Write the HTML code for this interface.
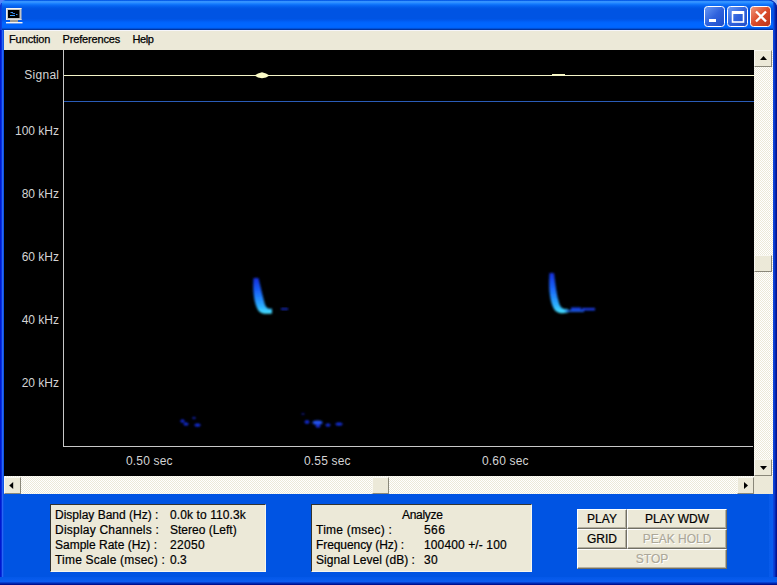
<!DOCTYPE html>
<html>
<head>
<meta charset="utf-8">
<style>
html,body{margin:0;padding:0;}
body{width:777px;height:585px;overflow:hidden;background:#0054e3;font-family:"Liberation Sans",sans-serif;position:relative;}
.abs{position:absolute;}
#frame{left:0;top:0;width:777px;height:585px;background:#0054e3;}
#title{left:0;top:0;width:777px;height:30px;
background:linear-gradient(to bottom,#0058e6 0%,#0a60ea 2%,#3593ff 5%,#2f8fff 9%,#1a80ff 12%,#0a6cf6 17%,#0460ee 22%,#0057e5 27%,#0054e3 32%,#0054e3 62%,#0059ee 68%,#0063fb 74%,#0066ff 80%,#0066ff 91%,#005ae8 94%,#0044c0 96.500%,#003098 99%,#003098 100%);}
#lb{left:0;top:30px;width:4px;height:555px;background:linear-gradient(to right,#0019cf 0,#0019cf 25%,#0a30dc 25%,#0a30dc 50%,#2866f5 50%,#2866f5 75%,#0e54e6 75%,#0e54e6 100%);}
#rb{left:769px;top:30px;width:8px;height:555px;background:linear-gradient(to right,#075aea 0,#0a5cee 50%,#0c44d8 50%,#0c44d8 62.5%,#0a38cc 62.5%,#0a38cc 75%,#0424ac 75%,#0424ac 87.5%,#001494 87.5%,#001494 100%);}
#bb{left:0;top:577px;width:777px;height:8px;background:linear-gradient(to bottom,#0358e8 0,#0a5cee 50%,#0c5cf0 50%,#0c5cf0 62.5%,#0840d0 62.5%,#0840d0 75%,#0028b0 75%,#0028b0 87.5%,#001090 87.5%,#001090 100%);}
#menu{left:4px;top:30px;width:769px;height:20px;background:#ece9d8;box-shadow:inset 0 1px 0 #f6f6fb;font-size:11px;color:#000;}
#menu span{-webkit-text-stroke:0.25px #000;position:absolute;top:3px;line-height:13px;white-space:nowrap;}
#plot{left:4px;top:50px;width:750px;height:426px;background:#000;}
.yl{position:absolute;right:718px;color:#d4d4d4;font-size:12px;line-height:14px;white-space:nowrap;text-align:right;}
.xl{letter-spacing:0.18px;position:absolute;top:454px;color:#d4d4d4;font-size:12px;line-height:14px;white-space:nowrap;}
.track{background-color:#f6f4ec;background-image:conic-gradient(#ffffff 25%,#ece9d8 0 50%,#ffffff 0 75%,#ece9d8 0);background-size:2px 2px;}
.btn3d{position:absolute;background:#ece9d8;box-sizing:border-box;border:1px solid;border-color:#fff #716f64 #716f64 #fff;box-shadow:inset -1px -1px 0 #aca899, inset 1px 1px 0 #f4f2e8;}
.sbtn{position:absolute;background:#ece9d8;box-sizing:border-box;border:1px solid;border-color:#f8f7f0 #8a887a #8a887a #f8f7f0;}
.info{position:absolute;background:#ece9d8;box-sizing:border-box;border:1px solid;border-color:#33332f #f7f6ee #f7f6ee #33332f;font-size:12px;color:#000;}
.info span{-webkit-text-stroke:0.2px #000;position:absolute;line-height:14px;white-space:nowrap;}
.pb{-webkit-text-stroke:0.2px currentColor;box-shadow:inset -1px -1px 0 #b4b0a0;position:absolute;background:#ece9d8;box-sizing:border-box;border:1px solid;border-color:#fff #716f64 #716f64 #fff;font-size:12px;color:#000;text-align:center;line-height:17px;padding-top:1px;white-space:nowrap;}
.pb.dis{color:#aca899;text-shadow:1px 1px 0 #fff;}
</style>
</head>
<body>
<div id="frame" class="abs"></div>
<div id="title" class="abs"></div>
<div id="lb" class="abs"></div>
<div id="rb" class="abs"></div>
<div id="bb" class="abs"></div>

<!-- title edges / corners -->
<div class="abs" style="left:0;top:3px;width:2px;height:27px;background:linear-gradient(to right,#0a34d4,#0c48e2)"></div>
<div class="abs" style="left:773px;top:3px;width:4px;height:27px;background:linear-gradient(to right,#0a4ce0 0,#0a4ce0 25%,#0838c4 25%,#0838c4 50%,#0424a8 50%,#0424a8 75%,#001494 75%,#001494 100%)"></div>
<svg class="abs" style="left:0;top:0" width="777" height="8" viewBox="0 0 777 8">
  <path d="M0 0 L5.500 0 C2.500 1 1 2.500 0 5.500 Z" fill="#5584fa"/>
  <path d="M777 0 L771 0 C774 1.200 775.800 3 777 6 Z" fill="#a4b8f0"/>
  <path d="M771 0 C774 1.200 775.800 3 777 6 L777 8 C775.500 4 773.500 2 769 0 Z" fill="#0a2cb4"/>
</svg>

<!-- title icon -->
<svg class="abs" style="left:6px;top:8px" width="17" height="16" viewBox="0 0 17 16">
  <rect x="0" y="0" width="15.500" height="12" fill="#c4c4c4"/>
  <rect x="0" y="0" width="15.500" height="1" fill="#f4f4f4"/>
  <rect x="0" y="0" width="1" height="12" fill="#f0f0f0"/>
  <rect x="1" y="11" width="14.500" height="1" fill="#dcdcdc"/>
  <rect x="2" y="2" width="11.500" height="8" fill="#000"/>
  <rect x="4.500" y="4" width="2.500" height="1" fill="#3c8ef0"/>
  <rect x="6.500" y="5" width="2.500" height="1" fill="#2f7be0"/>
  <rect x="10" y="6" width="1.500" height="1" fill="#3c8ef0"/>
  <rect x="4" y="7" width="5" height="1" fill="#46a6ff"/>
  <rect x="4" y="12" width="8" height="2" fill="#a09c94"/>
  <rect x="0" y="14" width="16.500" height="1" fill="#f4f4f4"/>
  <rect x="0" y="15" width="16.500" height="0.600" fill="#b8c4e8"/>
</svg>

<!-- caption buttons -->
<svg class="abs" style="left:704px;top:6px" width="68" height="22" viewBox="0 0 68 22">
  <defs>
    <linearGradient id="gb" x1="0" y1="0" x2="1" y2="1">
      <stop offset="0" stop-color="#6a9bf5"/><stop offset="0.5" stop-color="#2f62dd"/><stop offset="1" stop-color="#1e4cc8"/>
    </linearGradient>
    <linearGradient id="gr" x1="0" y1="0" x2="1" y2="1">
      <stop offset="0" stop-color="#ef9a80"/><stop offset="0.5" stop-color="#dc4a28"/><stop offset="1" stop-color="#b8341a"/>
    </linearGradient>
  </defs>
  <rect x="0.5" y="0.5" width="20" height="20" rx="3" fill="url(#gb)" stroke="#fff"/>
  <rect x="23.5" y="0.5" width="20" height="20" rx="3" fill="url(#gb)" stroke="#fff"/>
  <rect x="46.5" y="0.5" width="20" height="20" rx="3" fill="url(#gr)" stroke="#fff"/>
  <rect x="5" y="13" width="7" height="3" fill="#fff"/>
  <rect x="28.500" y="6" width="11" height="10" fill="none" stroke="#fff" stroke-width="1.6"/>
  <rect x="28" y="5" width="12" height="3" fill="#fff"/>
  <path d="M52 5.500 L62 15.500 M62 5.500 L52 15.500" stroke="#fff" stroke-width="2.300" fill="none"/>
</svg>

<div id="menu" class="abs">
  <span style="left:5px;letter-spacing:-0.1px">Function</span>
  <span style="left:58.500px;letter-spacing:-0.15px">Preferences</span>
  <span style="left:128.500px;letter-spacing:-0.45px">Help</span>
</div>

<div id="plot" class="abs"></div>
<svg class="abs" style="left:0;top:0" width="777" height="585" viewBox="0 0 777 585">
  <defs>
    <linearGradient id="call" x1="0" y1="0" x2="0" y2="1">
      <stop offset="0" stop-color="#1230dc"/><stop offset="0.4" stop-color="#1a68fa"/><stop offset="0.8" stop-color="#2cb0ff"/><stop offset="1" stop-color="#48e4ff"/>
    </linearGradient>
    <filter id="bl" x="-50%" y="-50%" width="200%" height="200%"><feGaussianBlur stdDeviation="0.9"/></filter>
    <filter id="bl2" x="-50%" y="-50%" width="200%" height="200%"><feGaussianBlur stdDeviation="0.6"/></filter>
  </defs>
  <!-- axes -->
  <rect x="63" y="50" width="1" height="397" fill="#c8c8c8"/>
  <rect x="63" y="446" width="690" height="1" fill="#c8c8c8"/>
  <!-- signal line -->
  <rect x="64" y="75" width="690" height="1" fill="#f4f4c8"/>
  <path d="M254.500 75.500 L258 73.500 L262 72.300 L266 73.500 L269.500 75.500 L266 77.500 L262 78.300 L258 77.500 Z" fill="#fbfbc6"/>
  <rect x="552" y="74" width="13" height="1" fill="#fbfbc6"/>
  <!-- blue limit line -->
  <rect x="64" y="101" width="690" height="1" fill="#2a5cb8"/>
  <!-- call 1 -->
  <g filter="url(#bl)">
    <path d="M253.500 278 C252.500 290 254 303 258 310 C260 313.500 265 314.500 272 313.500 L272 308.500 C268 309.500 265.500 307.500 264.500 303 C262.500 295 260.500 287 258.500 278 Z" fill="url(#call)"/>
  </g>
  <rect x="281" y="308" width="7" height="2" fill="#1426b4" filter="url(#bl)"/>
  <!-- call 2 -->
  <g filter="url(#bl)">
    <path d="M549.500 273 C548.500 286 549.500 300 553.500 308 C556 313.500 562 314 568 312.500 L568 309 C563 309.500 560.500 308 559 303 C556.500 295 555.500 285 554 273 Z" fill="url(#call)"/>
    <rect x="565" y="310" width="19" height="2" fill="#1a58d8"/>
    <rect x="571" y="307.500" width="10" height="2.400" fill="#1a40ec"/>
    <rect x="582" y="308" width="13" height="2.400" fill="#1a3ce8"/>
  </g>
  <!-- low noise -->
  <g filter="url(#bl)" fill="#1630e8">
    <ellipse cx="182.500" cy="421" rx="2.200" ry="1.500"/><ellipse cx="186" cy="424" rx="2.500" ry="1.600"/><ellipse cx="194" cy="418" rx="1.500" ry="1"/><ellipse cx="197.500" cy="425" rx="3" ry="1.600"/>
    <ellipse cx="307" cy="422" rx="2.500" ry="1.800"/><ellipse cx="317.500" cy="422.500" rx="5" ry="2" fill="#2858ff"/><ellipse cx="318" cy="426" rx="2.500" ry="1.500"/><ellipse cx="328" cy="425" rx="2.500" ry="1.500"/><ellipse cx="339" cy="424" rx="3.500" ry="1.600"/>
    <ellipse cx="303" cy="414" rx="1.500" ry="1" fill="#101c90"/>
  </g>
</svg>
<div class="yl" style="top:68px;letter-spacing:0.28px;margin-right:-0.3px">Signal</div>
<div class="yl" style="top:124px">100 kHz</div>
<div class="yl" style="top:187px">80 kHz</div>
<div class="yl" style="top:250px">60 kHz</div>
<div class="yl" style="top:313px">40 kHz</div>
<div class="yl" style="top:376px">20 kHz</div>
<div class="xl" style="left:126px">0.50 sec</div>
<div class="xl" style="left:304px">0.55 sec</div>
<div class="xl" style="left:482px">0.60 sec</div>
<!-- vertical scrollbar -->
<div class="abs track" style="left:754px;top:50px;width:19px;height:426px"></div>
<div class="sbtn" style="left:754px;top:50px;width:18px;height:17px"></div>
<div class="sbtn" style="left:754px;top:255px;width:18px;height:17px"></div>
<div class="sbtn" style="left:754px;top:459px;width:18px;height:17px"></div>
<!-- horizontal scrollbar -->
<div class="abs track" style="left:4px;top:476px;width:750px;height:18px"></div>
<div class="sbtn" style="left:4px;top:477px;width:17px;height:17px"></div>
<div class="sbtn" style="left:372px;top:477px;width:17px;height:17px"></div>
<div class="sbtn" style="left:737px;top:477px;width:17px;height:17px"></div>
<div class="abs" style="left:754px;top:476px;width:19px;height:18px;background:#ece9d8"></div>
<svg class="abs" style="left:0;top:0" width="777" height="585" viewBox="0 0 777 585">
  <path d="M760 60 L763.500 56 L767 60 Z" fill="#000"/>
  <path d="M760 466 L763.500 470 L767 466 Z" fill="#000"/>
  <path d="M13.200 482 L9.200 485.500 L13.200 489 Z" fill="#000"/>
  <path d="M744 482 L748 485.500 L744 489 Z" fill="#000"/>
</svg>

<!-- info panel 1 -->
<div class="info" style="left:50px;top:504px;width:216px;height:68px">
  <span style="left:4px;top:3px">Display Band (Hz) :</span><span style="left:119px;top:3px;letter-spacing:0.1px">0.0k to 110.3k</span>
  <span style="left:4px;top:18px;letter-spacing:0.22px">Display Channels :</span><span style="left:119px;top:18px">Stereo (Left)</span>
  <span style="left:4px;top:33px">Sample Rate (Hz) :</span><span style="left:119px;top:33px;letter-spacing:0.3px">22050</span>
  <span style="left:4px;top:48px;letter-spacing:0.2px">Time Scale (msec) :</span><span style="left:119px;top:48px">0.3</span>
</div>
<!-- info panel 2 -->
<div class="info" style="left:311px;top:504px;width:221px;height:68px">
  <span style="left:90px;top:3px;letter-spacing:-0.3px">Analyze</span>
  <span style="left:4px;top:18px;letter-spacing:0.25px">Time (msec) :</span><span style="left:112px;top:18px;letter-spacing:0.4px">566</span>
  <span style="left:4px;top:33px;letter-spacing:-0.08px">Frequency (Hz) :</span><span style="left:112px;top:33px;letter-spacing:0.12px">100400 +/- 100</span>
  <span style="left:4px;top:48px;letter-spacing:0.05px">Signal Level (dB) :</span><span style="left:112px;top:48px;letter-spacing:0.4px">30</span>
</div>
<!-- buttons -->
<div class="pb" style="left:577px;top:509px;width:50px;height:20px">PLAY</div>
<div class="pb" style="left:627px;top:509px;width:100px;height:20px">PLAY WDW</div>
<div class="pb" style="left:577px;top:529px;width:50px;height:20px">GRID</div>
<div class="pb dis" style="left:627px;top:529px;width:100px;height:20px">PEAK HOLD</div>
<div class="pb dis" style="left:577px;top:549px;width:150px;height:20px">STOP</div>
</body>
</html>
